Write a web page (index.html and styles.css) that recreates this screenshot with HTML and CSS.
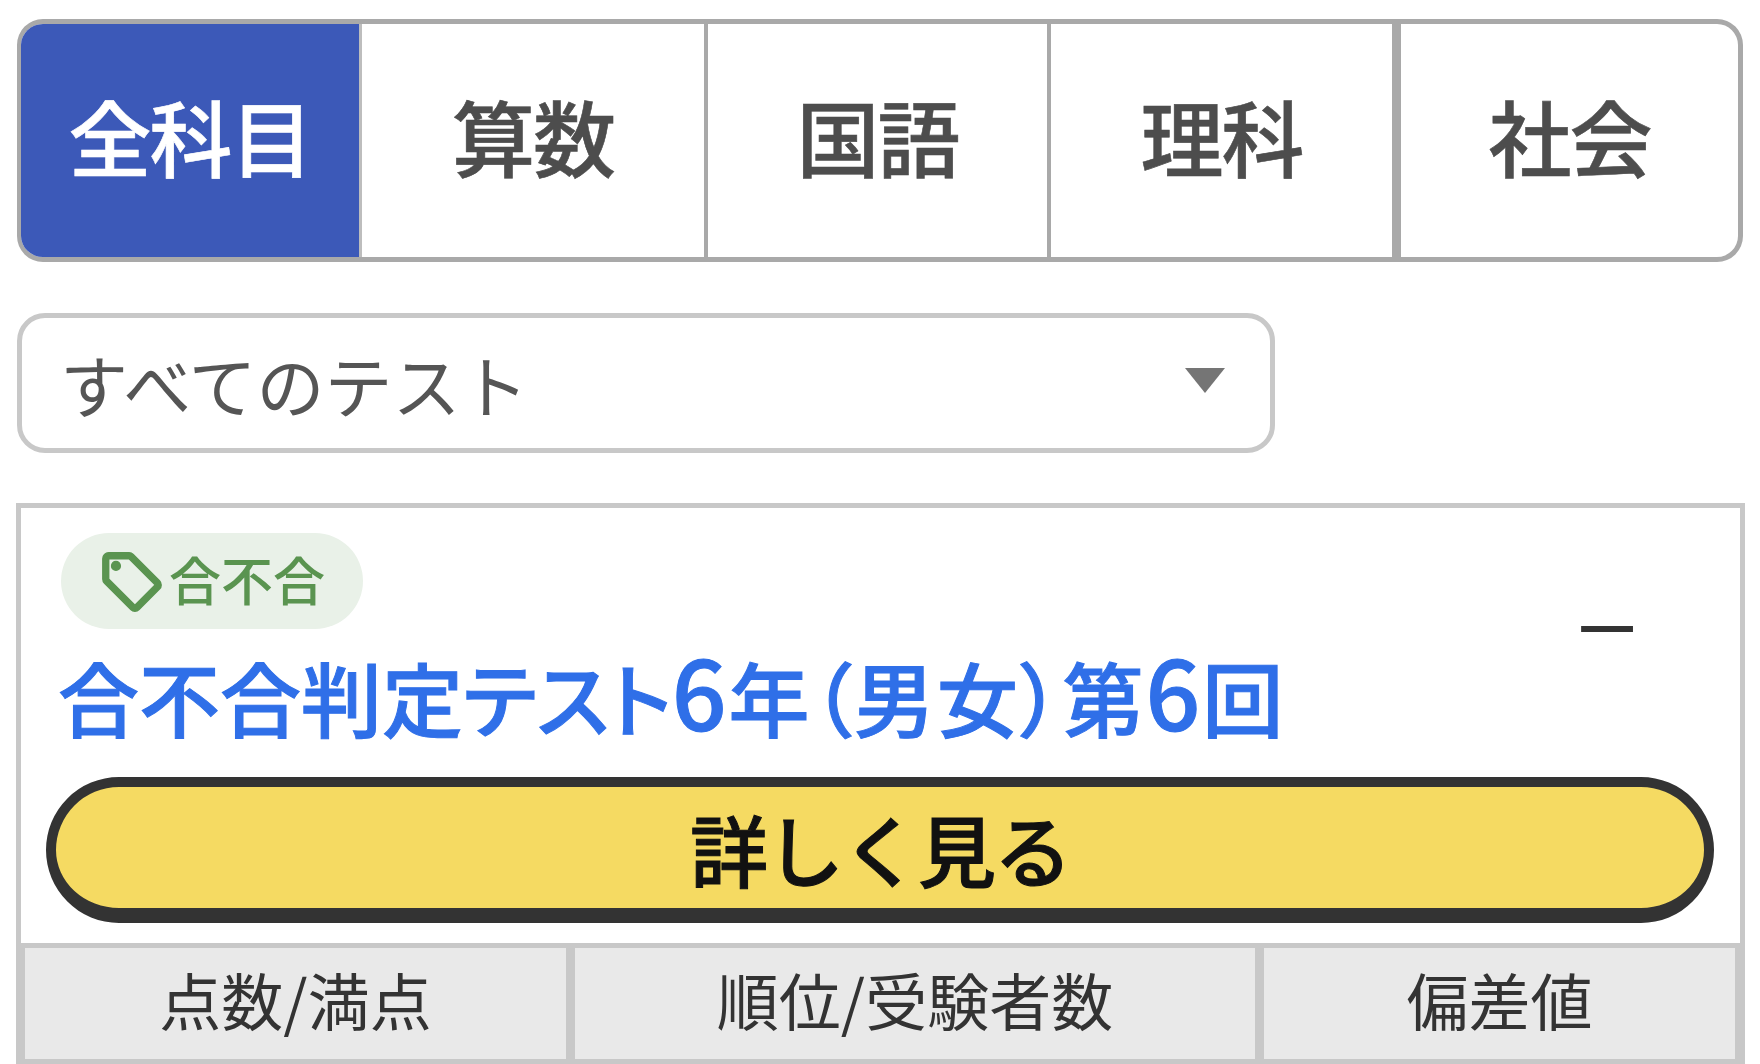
FILE: index.html
```html
<!DOCTYPE html>
<html lang="ja">
<head>
<meta charset="UTF-8" />
<title>テスト結果</title>
<link rel="stylesheet" href="styles.css">
</head>
<body>
  <div id="app">
    <nav class="tabs">
      <a class="tab tab-active">全科目</a>
      <a class="tab tab-second">算数</a>
      <a class="tab tab-third">国語</a>
      <a class="tab tab-fourth">理科</a>
      <a class="tab tab-last">社会</a>
    </nav>

    <div class="select-box">
      <span class="select-label">すべてのテスト</span>
      <span class="select-caret"></span>
    </div>

    <section class="card">
      <div class="card-head">
        <div class="card-info">
          <span class="pill">
            <svg class="pill-icon" viewBox="0 0 24 24" aria-hidden="true">
              <path d="M21.41 11.58l-9-9C12.05 2.22 11.55 2 11 2H4c-1.1 0-2 .9-2 2v7c0 .55.22 1.05.59 1.42l9 9c.36.36.86.58 1.41.58s1.05-.22 1.41-.59l7-7c.37-.36.59-.86.59-1.41s-.23-1.06-.59-1.42zM13 20.01L4 11V4h7v-.01l9 9-7 7.02z"/>
              <circle cx="6.5" cy="6.5" r="1.5"/>
            </svg>
            合不合
          </span>
          <h2 class="card-title">合不合判定テスト<span class="title-tail"><span class="title-num">6</span>年（男女）第<span class="title-num">6</span>回</span></h2>
        </div>
        <span class="card-dash">—</span>
      </div>

      <button class="detail-btn" type="button">詳しく見る</button>

      <div class="score-head">
        <div class="score-cell">点数/満点</div>
        <div class="score-cell">順位/受験者数</div>
        <div class="score-cell">偏差値</div>
      </div>
    </section>
  </div>
</body>
</html>
```

FILE: styles.css
```css
/* Reset & base */
*, *::before, *::after {
  box-sizing: border-box;
}
html, body {
  margin: 0;
  height: 100%;
  overflow: hidden;
  background: #fff;
  font-family: "Noto Sans CJK JP", "Noto Sans", sans-serif;
}
#app {
  padding: 19px 15px 0 16px;
}

/* Subject tabs */
.tabs {
  display: flex;
  height: 243px;
  margin: 0 2px 0 1px;
  border: 5px solid #a9a9a9;
  border-left-width: 4px;
  border-radius: 26px;
  overflow: hidden;
}
.tab {
  display: flex;
  align-items: center;
  justify-content: center;
  padding-bottom: 10px;
  font-size: 83px;
  font-weight: 500;
  letter-spacing: -2px;
  line-height: 1;
  color: #4d4d4d;
  -webkit-text-stroke: 0.6px currentColor;
  border-left: 4px solid #a9a9a9;
}
.tab-active {
  width: 338px;
  border-left: 0;
  background: #3c59b8;
  color: #fff;
}
.tab-second {
  width: 345px;
  border-left: 3px solid #bdbdbd;
}
.tab-third {
  width: 343px;
}
.tab-fourth {
  width: 345px;
}
.tab-last {
  flex: 1;
  border-left-width: 9px;
}

/* Test filter */
.select-box {
  display: flex;
  align-items: center;
  justify-content: space-between;
  width: 1258px;
  height: 140px;
  margin: 51px 0 0 1px;
  padding: 0 45px 0 38px;
  border: 5px solid #c8c8c8;
  border-radius: 28px;
}
.select-label {
  position: relative;
  top: 1px;
  font-size: 68px;
  line-height: 1;
  color: #555;
}
.select-caret {
  width: 0;
  height: 0;
  margin-bottom: 6px;
  border-top: 25px solid #757575;
  border-left: 20px solid transparent;
  border-right: 20px solid transparent;
}

/* Result card */
.card {
  margin-top: 50px;
  border: 5px solid #c8c8c8;
  border-bottom: 0;
}
.card-head {
  display: flex;
  justify-content: space-between;
  padding: 25px 104px 0 40px;
}
.pill {
  display: inline-flex;
  align-items: center;
  height: 96px;
  padding: 0 38px 4px 36px;
  border-radius: 48px;
  background: #e9f1e8;
  color: #5a9450;
  font-size: 52px;
  font-weight: 500;
  line-height: 1;
}
.pill-icon {
  width: 70px;
  height: 70px;
  margin: 6px 2px 0 0;
  fill: #5a9450;
  stroke: #5a9450;
  stroke-width: 0.5;
}
.card-title {
  margin: 18px 0 0 -3px;
  font-size: 81px;
  font-weight: 500;
  font-feature-settings: "palt";
  line-height: 1.2;
  color: #2f6fe8;
  -webkit-text-stroke: 1px currentColor;
}
.title-tail {
  letter-spacing: 2px;
}
.title-num {
  font-size: 96px;
  line-height: 0;
}
.card-dash {
  margin-top: 54px;
  font-size: 64px;
  font-weight: 700;
  line-height: 1;
  color: #333;
}

.detail-btn {
  display: block;
  width: 1668px;
  height: 146px;
  margin: 33px 0 20px 25px;
  padding: 0;
  border: 10px solid #333;
  border-bottom-width: 15px;
  border-radius: 73px;
  background: #f5da62;
  font-family: inherit;
  font-size: 78px;
  font-weight: 500;
  letter-spacing: -2px;
  line-height: 1;
  color: #111;
  -webkit-text-stroke: 1px currentColor;
}

.score-head {
  display: grid;
  grid-template-columns: 541px 680px 471px;
  gap: 9px;
  padding: 5px 5px 5px 4px;
  background: #c8c8c8;
}
.score-cell {
  display: flex;
  align-items: center;
  justify-content: center;
  height: 111px;
  padding-bottom: 9px;
  background: #e9e9e9;
  font-size: 62px;
  line-height: 1;
  color: #333;
}
```
